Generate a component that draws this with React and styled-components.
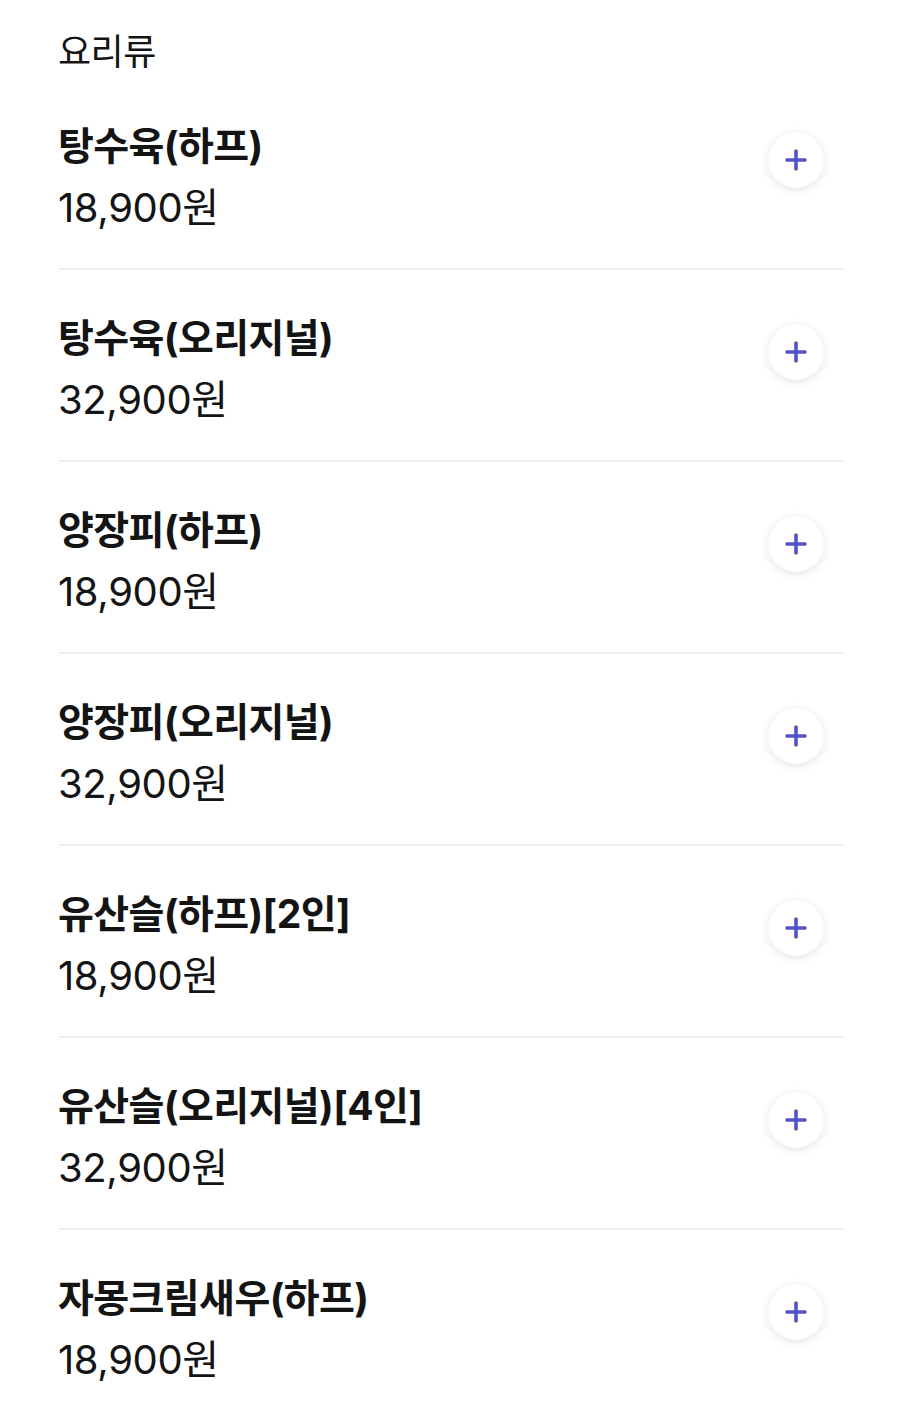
import React from 'react'
import styled, { createGlobalStyle } from 'styled-components'

const GlobalStyle = createGlobalStyle`
  body {
    margin: 0;
    background: #ffffff;
    font-family: Inter, "Noto Sans CJK KR", sans-serif;
    color: #141414;
  }
`

const Page = styled.div`
  padding: 28px 56px 0 58px;
`

const Category = styled.h2`
  margin: 0 0 2px;
  font-size: 36px;
  font-weight: 400;
  line-height: 48px;
  letter-spacing: -0.5px;
`

const Menu = styled.ul`
  list-style: none;
  margin: 0;
  padding: 0;
`

const Item = styled.li`
  display: flex;
  align-items: flex-start;
  justify-content: space-between;
  padding: 44px 0 36px;
  border-bottom: 2px solid ${(p) => (p.$last ? 'transparent' : '#f0f0f0')};
`

const Info = styled.div`
  display: flex;
  flex-direction: column;
`

const Name = styled.div`
  font-size: 39px;
  font-weight: 700;
  line-height: 48px;
  letter-spacing: -0.6px;
`

const Price = styled.div`
  margin-top: 14px;
  font-size: 40px;
  font-weight: 400;
  line-height: 48px;
  letter-spacing: -0.4px;
`

const AddButton = styled.button`
  flex: none;
  width: 56px;
  height: 56px;
  margin: 10px 20px 0 0;
  padding: 0;
  border: none;
  border-radius: 50%;
  background: #ffffff;
  box-shadow: 0 2px 10px rgba(0, 0, 0, 0.11);
  display: flex;
  align-items: center;
  justify-content: center;
  cursor: pointer;
`

const items = [
  { name: '탕수육(하프)', price: '18,900원' },
  { name: '탕수육(오리지널)', price: '32,900원' },
  { name: '양장피(하프)', price: '18,900원' },
  { name: '양장피(오리지널)', price: '32,900원' },
  { name: '유산슬(하프)[2인]', price: '18,900원' },
  { name: '유산슬(오리지널)[4인]', price: '32,900원' },
  { name: '자몽크림새우(하프)', price: '18,900원' },
]

function PlusIcon() {
  return (
    <svg width="26" height="26" viewBox="0 0 26 26">
      <path
        d="M13 4v18M4 13h18"
        stroke="#5652cc"
        strokeWidth="3.6"
        strokeLinecap="round"
      />
    </svg>
  )
}

export default function App() {
  return (
    <Page>
      <GlobalStyle />
      <Category>요리류</Category>
      <Menu>
        {items.map((item, i) => (
          <Item key={item.name} $last={i === items.length - 1}>
            <Info>
              <Name>{item.name}</Name>
              <Price>{item.price}</Price>
            </Info>
            <AddButton aria-label="담기">
              <PlusIcon />
            </AddButton>
          </Item>
        ))}
      </Menu>
    </Page>
  )
}
